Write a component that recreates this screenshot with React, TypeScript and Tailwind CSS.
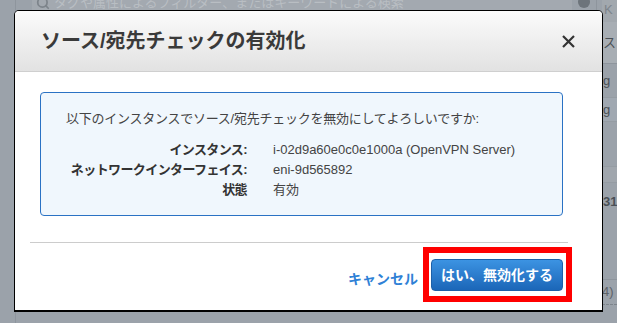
import { Search } from 'lucide-react';

const rows = [
  { label: 'インスタンス:', value: 'i-02d9a60e0c0e1000a (OpenVPN Server)' },
  { label: 'ネットワークインターフェイス:', value: 'eni-9d565892' },
  { label: '状態', value: '有効' },
];

export default function App() {
  return (
    <div className="relative w-[617px] h-[323px] overflow-hidden bg-[#9ba2aa] font-['Liberation_Sans','Noto_Sans_CJK_JP',sans-serif]">
      {/* Dimmed page behind the dialog */}
      <div className="flex h-full">
        <div className="w-[16px] border-r border-[#8e959d]" />
        <div className="flex flex-1 flex-col">
          <div className="flex h-[14px] items-start">
            <div className="ml-[16px] flex h-[14px] w-[540px] -mt-[4px] items-center gap-[4px] bg-[#a3a9b0] px-[4px]">
              <Search className="h-[14px] w-[14px] text-[#7d848b]" strokeWidth={3} />
              <span className="text-[13px] text-[#b9bec3]">タグや属性によるフィルター、またはキーワードによる検索</span>
            </div>
            <div className="ml-[6px] -mt-[4px] h-[12px] w-[12px] rounded-full bg-[#6d747b]" />
            <div className="ml-[6px] h-[10px] border-l border-[#8e959d]" />
          </div>
          <div className="flex flex-1">
            <div className="flex-1" />
            <div className="flex w-[15px] flex-col text-[13px] text-[#4a5056]">
              <div className="-mt-[14px] h-[22px] bg-[#a2a8ae] pl-[2px] text-[#7d848b]">K</div>
              <div className="flex h-[42px] items-center border-b border-[#8e959d] bg-[#a8aeb4] pl-[1px]">ス</div>
              <div className="flex h-[34px] items-center border-b border-[#959ca3] pl-[1px]">g</div>
              <div className="flex h-[24px] items-center border-b border-[#959ca3] bg-[#a0a8b1] pl-[1px]">g</div>
              <div className="h-[45px] border-b border-[#959ca3]" />
              <div className="h-[16px] border-b border-[#959ca3] bg-[#a0a6ad]" />
              <div className="flex h-[38px] items-center pl-[1px] font-bold">31</div>
              <div className="h-[59px] border-b border-[#8e959d]" />
              <div className="flex h-[24px] items-center text-[#5d6369]">4)</div>
              <div className="border-b border-dashed border-[#7d848b]" />
            </div>
          </div>
        </div>
      </div>

      {/* Dialog */}
      <div className="absolute left-[14px] top-[10px] flex h-[302px] w-[589px] flex-col rounded-t-[5px] border border-b-2 border-black bg-white">
        <div className="flex h-[61px] items-center justify-between rounded-t-[4px] border-b border-[#cfcfcf] bg-gradient-to-b from-[#fbfbfb] to-[#e2e2e2] pl-[26px] pr-[26px]">
          <h2 className="text-[20px] font-bold text-[#3a3a3a]">ソース/宛先チェックの有効化</h2>
          <svg width="15" height="15" viewBox="0 0 15 15" className="text-[#333]">
            <path d="M2 2L13 13M13 2L2 13" stroke="currentColor" strokeWidth="2.2" />
          </svg>
        </div>

        <div className="ml-[25px] mt-[20px] h-[124px] w-[523px] rounded-[4px] border border-[#2a72c4] bg-[#f0f7fd] pl-[25px] pt-[17px] text-[13px] text-[#444]">
          <p className="whitespace-nowrap leading-[18px] tracking-[-0.25px]">以下のインスタンスでソース/宛先チェックを無効にしてよろしいですか:</p>
          <div className="mt-[12px] flex flex-col">
            {rows.map(r => (
              <div key={r.label} className="flex h-[20px] items-center whitespace-nowrap">
                <span className="w-[181px] text-right font-bold tracking-[-0.6px] text-[#333]">{r.label}</span>
                <span className="ml-[26px] text-[#444]">{r.value}</span>
              </div>
            ))}
          </div>
        </div>

        <div className="ml-[15px] mt-[26px] w-[538px] border-t border-[#cccccc]" />

        <div className="mr-[30px] mt-[4px] flex items-center justify-end">
          <a className="mr-[5px] mt-[9px] text-[14px] font-bold text-[#2f81d6]">キャンセル</a>
          <div className="border-[6px] border-[#ff0000] pb-[5px] pl-[2px] pr-[3px] pt-[6px]">
            <button className="h-[32px] w-[132px] rounded-[4px] border border-[#1d60a8] bg-gradient-to-b from-[#3c93e2] to-[#1b66b8] text-[14px] font-bold text-white">
              はい、無効化する
            </button>
          </div>
        </div>
      </div>
    </div>
  );
}
